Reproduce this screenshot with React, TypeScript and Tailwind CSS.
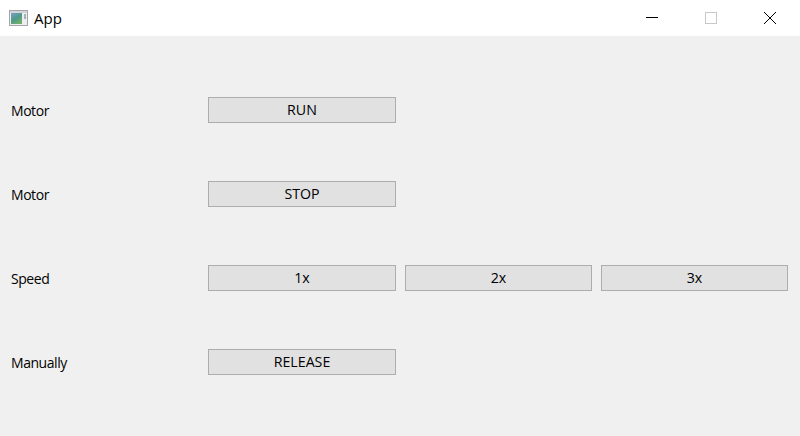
const ActionButton = ({ label, className = "" }: { label: string; className?: string }) => (
  <button className={`flex h-[26px] items-center justify-center border border-[#adadad] bg-[#e1e1e1] text-[14.2px] text-black ${className}`}>
    {label}
  </button>
);

const Row = ({ label, buttons }: { label: string; buttons: string[] }) => (
  <div className="flex h-[84px] items-center pl-[11px] pr-3">
    <span className="w-[197px] text-[14px] tracking-[-0.45px] text-black">{label}</span>
    <div className="flex gap-[9px]">
      {buttons.map((b, i) => (
        <ActionButton key={b} label={b} className={i === 0 ? "w-[188px]" : "w-[187px]"} />
      ))}
    </div>
  </div>
);

export default function App() {
  return (
    <div className="flex h-[436px] w-[800px] flex-col overflow-hidden bg-[#f0f0f0] font-['Open_Sans',sans-serif]">
      <div className="flex h-9 items-center bg-white">
        <svg className="ml-[9px] h-4 w-[19px]" viewBox="0 0 19 16">
          <defs>
            <linearGradient id="appIcon" x1="0" y1="0" x2="0.6" y2="1">
              <stop offset="0" stopColor="#7d9fc4" />
              <stop offset="0.55" stopColor="#4f9a8c" />
              <stop offset="1" stopColor="#6fae6a" />
            </linearGradient>
          </defs>
          <rect x="0.5" y="0.5" width="18" height="15" fill="#eeeef0" stroke="#a5a5aa" />
          <rect x="1" y="1" width="17" height="2" fill="#d4d4d8" />
          <rect x="2" y="3" width="11" height="11" fill="url(#appIcon)" />
          <rect x="15" y="4" width="2" height="5" fill="#9db8b0" />
        </svg>
        <span className="ml-[6px] text-[15px] text-black">App</span>
        <svg className="ml-auto mr-[18px] h-[12px] w-[136px]" viewBox="0 0 136 12" fill="none" shapeRendering="crispEdges">
          <path d="M0 5.5H12" stroke="#000" />
          <rect x="59.5" y="0.5" width="11" height="11" stroke="#c8c8c8" />
          <path d="M118 0L130 12M130 0L118 12" stroke="#000" shapeRendering="auto" />
        </svg>
      </div>
      <div className="flex flex-1 flex-col py-8">
        <Row label="Motor" buttons={["RUN"]} />
        <Row label="Motor" buttons={["STOP"]} />
        <Row label="Speed" buttons={["1x", "2x", "3x"]} />
        <Row label="Manually" buttons={["RELEASE"]} />
      </div>
    </div>
  );
}
